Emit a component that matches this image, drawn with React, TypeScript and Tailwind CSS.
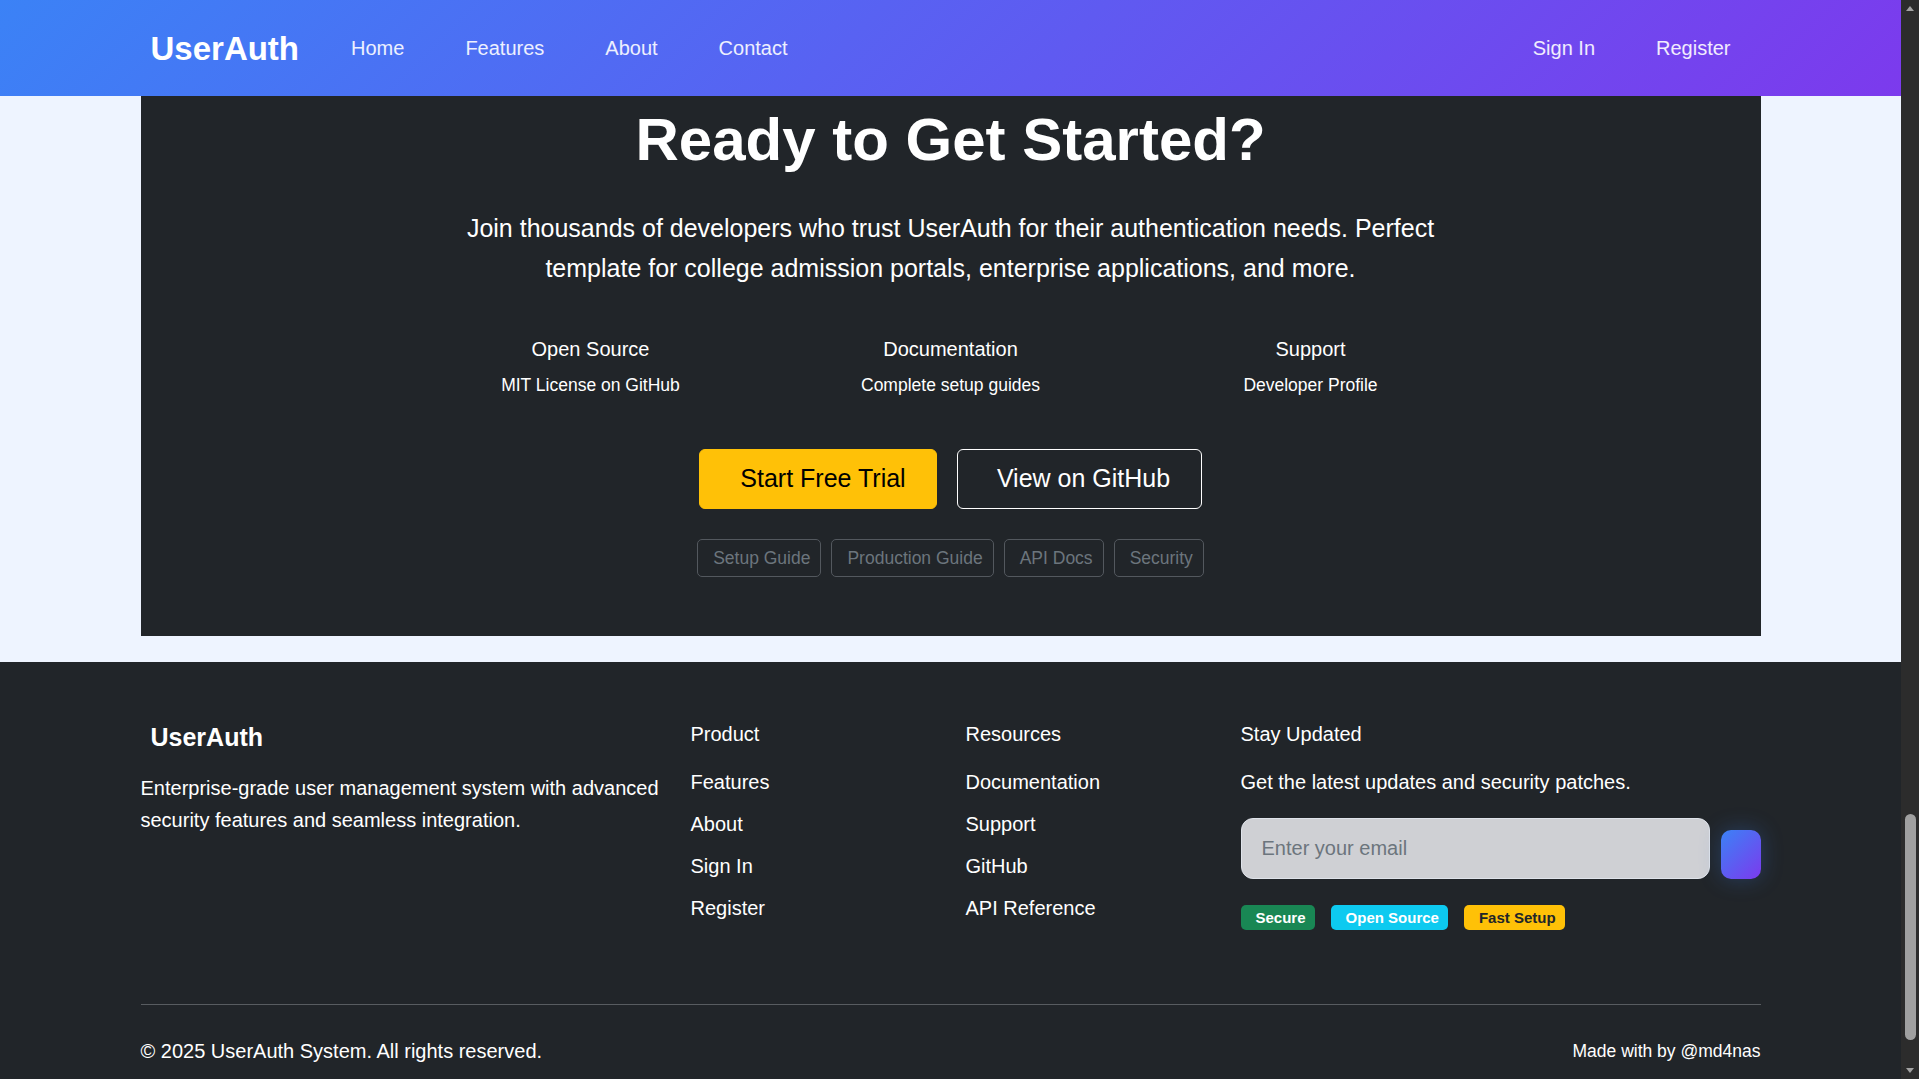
const navLinks = ['Home', 'Features', 'About', 'Contact'];

const highlights = [
  { title: 'Open Source', text: 'MIT License on GitHub' },
  { title: 'Documentation', text: 'Complete setup guides' },
  { title: 'Support', text: 'Developer Profile' },
];

const guideLinks = ['Setup Guide', 'Production Guide', 'API Docs', 'Security'];
const productLinks = ['Features', 'About', 'Sign In', 'Register'];
const resourceLinks = ['Documentation', 'Support', 'GitHub', 'API Reference'];

const badges = [
  { label: 'Secure', className: 'bg-[#198754] text-white' },
  { label: 'Open Source', className: 'bg-[#0dcaf0] text-white' },
  { label: 'Fast Setup', className: 'bg-[#ffc107] text-[#212529]' },
];

function Navbar() {
  return (
    <nav className="z-10 h-[96px] shrink-0 bg-[linear-gradient(135deg,#3b82f6_0%,#7c3aed_100%)] text-white">
      <div className="mx-auto flex h-full w-[1620px] items-center">
        <a className="ml-[10px] text-[33px] leading-none font-bold">UserAuth</a>
        <ul className="ml-[52px] flex gap-[61px] text-[20px] text-white/90">
          {navLinks.map((link) => (
            <li key={link}>{link}</li>
          ))}
        </ul>
        <ul className="mr-[30px] ml-auto flex gap-[61px] text-[20px] text-white/90">
          <li>Sign In</li>
          <li>Register</li>
        </ul>
      </div>
    </nav>
  );
}

function CallToAction() {
  return (
    <section className="bg-[#eef4ff] pb-[26px]">
      <div className="mx-auto w-[1620px] bg-[#212529] pt-[8px] pb-[59px] text-center text-white">
        <h2 className="text-[60px] leading-[72px] font-bold">Ready to Get Started?</h2>
        <p className="mx-auto mt-[32px] w-[1040px] text-[25px] leading-[40px]">
          Join thousands of developers who trust UserAuth for their authentication needs. Perfect template for college
          admission portals, enterprise applications, and more.
        </p>
        <div className="mx-auto mt-[49px] grid w-[1080px] grid-cols-3">
          {highlights.map((item) => (
            <div key={item.title}>
              <h6 className="mb-[10px] text-[20px] leading-[24px]">{item.title}</h6>
              <p className="text-[17.5px] leading-[28px]">{item.text}</p>
            </div>
          ))}
        </div>
        <div className="mt-[50px] flex justify-center gap-[20px]">
          <button className="flex h-[60px] w-[238px] items-center justify-center rounded-[6px] border border-[#ffc107] bg-[#ffc107] pl-[10px] text-[25px] text-black">
            Start Free Trial
          </button>
          <button className="flex h-[60px] w-[245px] items-center justify-center rounded-[6px] border border-white pl-[8px] text-[25px] text-white">
            View on GitHub
          </button>
        </div>
        <div className="mt-[30px] flex justify-center gap-[10px]">
          {guideLinks.map((link) => (
            <button
              key={link}
              className="h-[38px] rounded-[5px] border border-[#53585e] pr-[10px] pl-[15px] text-[17.5px] text-[#6c757d]"
            >
              {link}
            </button>
          ))}
        </div>
      </div>
    </section>
  );
}

function LinkColumn({ title, links }: { title: string; links: string[] }) {
  return (
    <div>
      <h6 className="mb-[20px] text-[20px] leading-[24px]">{title}</h6>
      <ul>
        {links.map((link) => (
          <li key={link} className="mb-[10px] text-[20px] leading-[32px]">
            {link}
          </li>
        ))}
      </ul>
    </div>
  );
}

function Footer() {
  return (
    <footer className="bg-[#212529] pt-[60px] pb-[12px] text-white">
      <div className="mx-auto w-[1620px]">
        <div className="grid grid-cols-[520px_245px_245px_520px] gap-x-[30px]">
          <div>
            <h5 className="mb-[20px] pl-[10px] text-[25px] leading-[30px] font-bold">UserAuth</h5>
            <p className="text-[20px] leading-[32px]">
              Enterprise-grade user management system with advanced security features and seamless integration.
            </p>
          </div>
          <LinkColumn title="Product" links={productLinks} />
          <LinkColumn title="Resources" links={resourceLinks} />
          <div>
            <h6 className="mb-[20px] text-[20px] leading-[24px]">Stay Updated</h6>
            <p className="mb-[20px] text-[20px] leading-[32px]">Get the latest updates and security patches.</p>
            <div className="flex items-end gap-[11px]">
              <input
                type="email"
                placeholder="Enter your email"
                className="h-[61px] min-w-0 flex-1 rounded-[12px] border border-[#dfe3ea] bg-[#cfd0d4] px-[20px] text-[20px] text-[#212529] outline-none placeholder:text-[#6c757d]"
              />
              <button className="h-[49px] w-[40px] rounded-[10px] bg-[linear-gradient(135deg,#3b82f6_0%,#7c3aed_100%)] shadow-[0_0_22px_rgba(59,130,246,0.28)]" />
            </div>
            <div className="mt-[26px] flex gap-[16px]">
              {badges.map((badge) => (
                <span
                  key={badge.label}
                  className={`flex h-[25px] items-center rounded-[5px] pr-[9px] pl-[15px] text-[15px] leading-none font-bold ${badge.className}`}
                >
                  {badge.label}
                </span>
              ))}
            </div>
          </div>
        </div>
        <div className="mt-[70px] h-px bg-[#585c60]" />
        <div className="mt-[30px] flex items-center justify-between">
          <p className="text-[20px] leading-[32px]">© 2025 UserAuth System. All rights reserved.</p>
          <p className="text-[17.5px] leading-[32px]">Made with by @md4nas</p>
        </div>
      </div>
    </footer>
  );
}

// browser scrollbar, page scrolled to the bottom
function Scrollbar() {
  return (
    <div className="flex h-screen w-[18px] shrink-0 flex-col items-center bg-[#2c2c2c]">
      <svg width="10" height="17" viewBox="0 0 10 17" className="shrink-0">
        <path d="M1 11 L5 6 L9 11 Z" fill="#a3a3a3" />
      </svg>
      <div className="flex w-full flex-1 flex-col justify-end pb-[22px]">
        <div className="mx-auto h-[226px] w-[11px] rounded-full bg-[#a0a0a0]" />
      </div>
      <svg width="10" height="17" viewBox="0 0 10 17" className="shrink-0">
        <path d="M1 6 L9 6 L5 11 Z" fill="#a3a3a3" />
      </svg>
    </div>
  );
}

export default function App() {
  return (
    <div className="flex h-screen overflow-hidden bg-[#eef4ff] font-['Liberation_Sans',Arial,sans-serif]">
      <div className="flex min-w-0 flex-1 flex-col">
        <Navbar />
        <div className="flex min-h-0 flex-1 flex-col justify-end overflow-hidden">
          <CallToAction />
          <Footer />
        </div>
      </div>
      <Scrollbar />
    </div>
  );
}
